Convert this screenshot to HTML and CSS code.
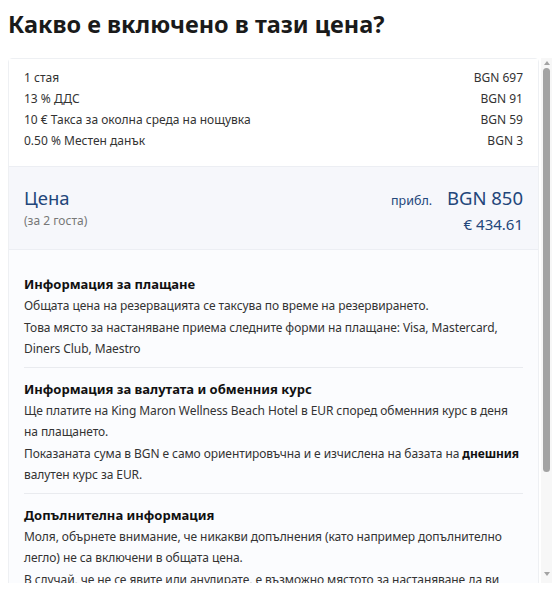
FILE: index.html
```html
<!DOCTYPE html>
<html lang="bg">
  <head>
    <meta charset="UTF-8" />
    <meta name="viewport" content="width=device-width, initial-scale=1.0" />
    <title>Какво е включено в тази цена?</title>
    <link rel="stylesheet" href="styles.css">
  </head>
  <body>
    <h2 class="title" lang="bg">Какво е включено в тази цена?</h2>

    <div class="price-wrap">
      <div class="price-scroll">
        <div class="price-card">
          <!-- разбивка на цената -->
          <ul class="fees">
            <li><span>1 стая</span><span>BGN 697</span></li>
            <li><span>13 % ДДС</span><span>BGN 91</span></li>
            <li><span>10 € Такса за околна среда на нощувка</span><span>BGN 59</span></li>
            <li><span>0.50 % Местен данък</span><span>BGN 3</span></li>
          </ul>

          <div class="total">
            <div class="total-left">
              <div class="total-label">Цена</div>
              <div class="total-guests">(за 2 госта)</div>
            </div>
            <div class="total-right">
              <div class="total-main"><span class="approx">прибл.</span> BGN 850</div>
              <div class="total-eur">€ 434.61</div>
            </div>
          </div>

          <div class="info">
            <div class="info-block">
              <h4>Информация за плащане</h4>
              <p>Общата цена на резервацията се таксува по време на резервирането.</p>
              <p>Това място за настаняване приема следните форми на плащане: Visa, Mastercard, Diners Club, Maestro</p>
            </div>
            <div class="info-block">
              <h4>Информация за валутата и обменния курс</h4>
              <p>Ще платите на King Maron Wellness Beach Hotel в EUR според обменния курс в деня на плащането.</p>
              <p>Показаната сума в BGN е само ориентировъчна и е изчислена на базата на <b>днешния</b> валутен курс за EUR.</p>
            </div>
            <div class="info-block">
              <h4>Допълнителна информация</h4>
              <p>Моля, обърнете внимание, че никакви допълнения (като например допълнително легло) не са включени в общата цена.</p>
              <p>В случай, че не се явите или анулирате, е възможно мястото за настаняване да ви начисли съответната такса.</p>
            </div>
          </div>
        </div>
      </div>

      <!-- barra de scroll dibujada -->
      <div class="scrollbar">
        <span class="arrow-up"></span>
        <span class="thumb"></span>
        <span class="arrow-down"></span>
      </div>
    </div>
  </body>
</html>
```

FILE: styles.css
```css
html {
  box-sizing: border-box;
  font-family: "Noto Sans", "Open Sans", sans-serif;
  font-size: 12px;
}

*,
*:before,
*:after {
  box-sizing: inherit;
}

body {
  margin: 0;
  padding: 0 0 0 8px;
  color: #333;
  background: #fff;
}

.title {
  margin: 0;
  padding: 9px 0 19px;
  font-family: "Noto Sans", sans-serif;
  font-size: 23.5px;
  line-height: 30px;
  font-weight: 700;
  color: #1a1a1a;
}

/* caja con scroll */
.price-wrap {
  display: flex;
  height: 525px;
}

.price-scroll {
  flex: 1;
  overflow: hidden;
}

.price-card {
  margin-right: 2px;
  border: 1px solid #eef0f3;
  border-radius: 4px;
  background: #fbfcfe;
}

.scrollbar {
  width: 11px;
  display: flex;
  flex-direction: column;
  align-items: center;
  background: #f7f7f7;
}

.arrow-up,
.arrow-down {
  width: 0;
  height: 0;
  border-left: 3.5px solid transparent;
  border-right: 3.5px solid transparent;
}

.arrow-up {
  margin-top: 3px;
  border-bottom: 4px solid #a3a3a3;
}

.arrow-down {
  margin-top: auto;
  margin-bottom: 7px;
  border-top: 4px solid #a3a3a3;
}

.thumb {
  width: 7px;
  height: 404px;
  margin-top: 3px;
  background: #a3a3a3;
  border-radius: 4px;
}

.fees {
  list-style: none;
  margin: 0;
  padding: 8px 15px 15px;
  background: #fff;
}

.fees li {
  display: flex;
  justify-content: space-between;
  line-height: 21px;
}

.total {
  display: flex;
  justify-content: space-between;
  padding: 18px 15px 15px;
  background: #f6f7fb;
  border-top: 1px solid #eceef3;
  border-bottom: 1px solid #eceef3;
  color: #23467a;
}

.total-label,
.total-main {
  font-size: 18.5px;
  line-height: 26px;
}

.total-guests {
  font-size: 12px;
  line-height: 20px;
  color: #777;
}

.total-right {
  text-align: right;
}

.approx {
  font-size: 12.5px;
  margin-right: 10px;
}

.total-eur {
  font-size: 15px;
  line-height: 20px;
}

.info {
  padding: 13px 15px 0;
}

.info-block {
  padding: 10px 0 7px;
  border-bottom: 1px solid #e9ebef;
}

.info-block h4 {
  margin: 0;
  font-size: 13px;
  line-height: 22px;
  color: #111;
}

.info-block p {
  margin: 0;
  line-height: 21.5px;
  letter-spacing: -0.08px;
}

.info-block b {
  color: #111;
}
```
